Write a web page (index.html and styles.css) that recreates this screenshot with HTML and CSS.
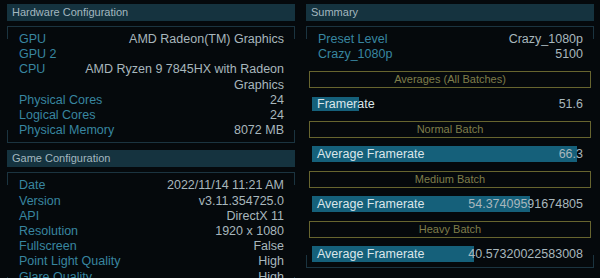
FILE: index.html
```html
<!DOCTYPE html>
<html lang="en">
<head>
  <meta charset="UTF-8" />
  <title>Benchmark Results</title>
  <link rel="stylesheet" href="styles.css">
</head>
<body>
  <div class="layout">
    <div class="col">
      <div class="head">Hardware Configuration</div>
      <div class="panel">
        <div class="row"><span class="key">GPU</span><span class="val">AMD Radeon(TM) Graphics</span></div>
        <div class="row"><span class="key">GPU 2</span><span class="val"></span></div>
        <div class="row"><span class="key">CPU</span><span class="val">AMD Ryzen 9 7845HX with Radeon Graphics</span></div>
        <div class="row"><span class="key">Physical Cores</span><span class="val">24</span></div>
        <div class="row"><span class="key">Logical Cores</span><span class="val">24</span></div>
        <div class="row"><span class="key">Physical Memory</span><span class="val">8072 MB</span></div>
      </div>

      <div class="head second">Game Configuration</div>
      <div class="panel">
        <div class="row"><span class="key">Date</span><span class="val">2022/11/14 11:21 AM</span></div>
        <div class="row"><span class="key">Version</span><span class="val">v3.11.354725.0</span></div>
        <div class="row"><span class="key">API</span><span class="val">DirectX 11</span></div>
        <div class="row"><span class="key">Resolution</span><span class="val">1920 x 1080</span></div>
        <div class="row"><span class="key">Fullscreen</span><span class="val">False</span></div>
        <div class="row"><span class="key">Point Light Quality</span><span class="val">High</span></div>
        <div class="row"><span class="key">Glare Quality</span><span class="val">High</span></div>
      </div>
    </div>

    <div class="col">
      <div class="head">Summary</div>
      <div class="panel">
        <div class="row"><span class="key">Preset Level</span><span class="val">Crazy_1080p</span></div>
        <div class="row"><span class="key">Crazy_1080p</span><span class="val">5100</span></div>

        <div class="batch">Averages (All Batches)</div>
        <div class="bar short" style="--w: 47px"><span>Framerate</span><span>51.6</span></div>

        <div class="batch">Normal Batch</div>
        <div class="bar" style="--w: 265px"><span>Average Framerate</span><span>66.3</span></div>

        <div class="batch">Medium Batch</div>
        <div class="bar" style="--w: 218px"><span>Average Framerate</span><span>54.37409591674805</span></div>

        <div class="batch">Heavy Batch</div>
        <div class="bar" style="--w: 162px"><span>Average Framerate</span><span>40.57320022583008</span></div>
      </div>
    </div>
  </div>
</body>
</html>
```

FILE: styles.css
```css
body {
  margin: 0;
  padding: 4px 6px 0 7px;
  background: #05090c;
  font-family: "Liberation Sans", Arial, sans-serif;
  font-size: 12.5px;
  color: #a8b7bd;
  overflow: hidden;
}
.layout {
  display: grid;
  grid-template-columns: 288px 288px;
  gap: 11px;
}
.head {
  height: 17px;
  line-height: 17px;
  padding-left: 5px;
  background: #15333f;
  color: #a3b7bf;
  font-size: 11px;
  margin-bottom: 5px;
}
.head.second { margin-top: 7px; }

.panel {
  border-top: 1px solid #1b3440;
  border-bottom: 1px solid #1b3440;
  padding: 5px 11px 4px 12px;
  background:
    linear-gradient(#1b3440, #1b3440) left top / 1px 12px no-repeat,
    linear-gradient(#1b3440, #1b3440) right top / 1px 12px no-repeat,
    linear-gradient(#1b3440, #1b3440) left bottom / 1px 12px no-repeat,
    linear-gradient(#1b3440, #1b3440) right bottom / 1px 12px no-repeat;
}
.row {
  display: flex;
  justify-content: space-between;
  line-height: 15.2px;
}
.key { color: #3886a0; }
.val { max-width: 200px; text-align: right; }

.batch {
  margin: 9px -8px 0 -9px;
  height: 15px;
  line-height: 15px;
  border: 1px solid #67652f;
  color: #7f7d4a;
  font-size: 11px;
  text-align: center;
}
.bar {
  display: flex;
  justify-content: space-between;
  margin: 8px 0 0 -6px;
  padding-left: 5px;
  height: 16px;
  line-height: 16px;
  color: #dbe6ea;
  background: linear-gradient(#15607a, #15607a) left center / var(--w) 100% no-repeat;
}
.bar.short { background-size: var(--w) 14px; }
.bar span:last-child { color: #a8b7bd; }
.col:last-child .panel { padding-bottom: 5px; }
```
